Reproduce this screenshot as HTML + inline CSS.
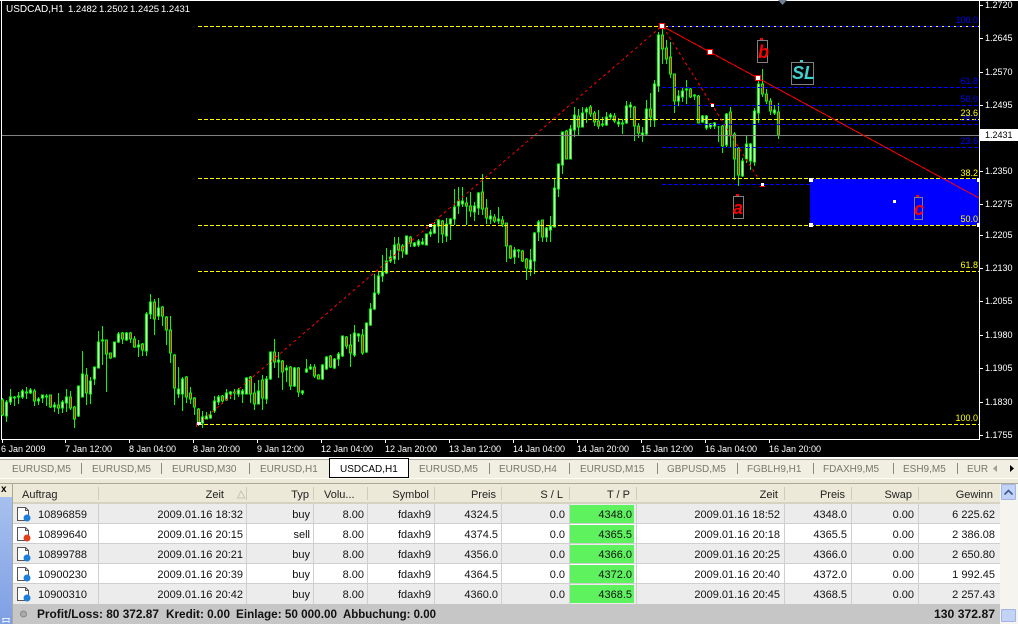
<!DOCTYPE html>
<html><head><meta charset="utf-8"><title>USDCAD,H1</title>
<style>
html,body{margin:0;padding:0;background:#000;width:1018px;height:624px;overflow:hidden}
svg{display:block;font-family:"Liberation Sans",Arial,sans-serif}
.c{shape-rendering:crispEdges}
.ax text{font-size:9px;fill:#fff}
.y{font-size:9px;fill:#ff0}
.b{font-size:9px;fill:#00f}
.tab{font-size:10px;fill:#77776a}
.h{font-size:11px;fill:#222}
.r{font-size:11px;fill:#111}
.e{text-anchor:end}
</style></head><body>
<svg width="1018" height="624" viewBox="0 0 1018 624" xmlns="http://www.w3.org/2000/svg">
<rect width="1018" height="624" fill="#000"/>
<!-- chart frame -->
<g class="c" fill="#fff">
<rect x="0" y="0" width="1018" height="1"/>
<rect x="1" y="0" width="1" height="440"/>
<rect x="1" y="439" width="979" height="1"/>
<rect x="979" y="0" width="1" height="440"/>
</g>
<!-- blue rectangle -->
<rect class="c" x="810" y="179" width="169" height="46" fill="#00f"/>
<!-- candles wicks -->
<path class="c" fill="none" stroke="#0f0" d="M2.5 398V416M6.5 400V422M10.5 389V405M14.5 396V406M18.5 392V404M22.5 389V399M26.5 387V399M30.5 388V394M34.5 389V406M38.5 397V405M42.5 395V403M46.5 394V406M50.5 395V408M54.5 402V412M58.5 393V414M62.5 400V413M66.5 389V412M70.5 391V410M74.5 406V428M78.5 386V417M82.5 351V397M86.5 368V405M90.5 377V404M94.5 367V385M98.5 331V368M102.5 326V365M106.5 340V392M110.5 353V359M114.5 342V357M118.5 332V343M122.5 332V344M126.5 332V341M130.5 332V343M134.5 336V348M138.5 340V357M142.5 343V356M146.5 312V356M150.5 294V319M154.5 299V335M158.5 298V320M162.5 306V326M166.5 316V345M170.5 316V363M174.5 354V405M178.5 367V398M182.5 377V411M186.5 376V403M190.5 387V404M194.5 397V415M198.5 408V426M202.5 411V428M206.5 412V419M210.5 411V419M214.5 396V413M218.5 395V405M222.5 395V404M226.5 389V401M230.5 391V399M234.5 389V400M238.5 388V397M242.5 389V403M246.5 377V394M250.5 376V403M254.5 383V410M258.5 380V404M262.5 375V410M266.5 376V404M270.5 352V380M274.5 339V368M278.5 352V378M282.5 360V390M286.5 365V382M290.5 366V390M294.5 367V387M298.5 367V397M302.5 390V395M306.5 359V373M310.5 364V370M314.5 364V378M318.5 374V379M322.5 364V380M326.5 356V370M330.5 355V368M334.5 358V369M338.5 352V366M342.5 336V357M346.5 336V349M350.5 334V367M354.5 325V357M358.5 333V342M362.5 329V355M366.5 323V353M370.5 303V326M374.5 274V310M378.5 272V295M382.5 255V282M386.5 248V274M390.5 250V263M394.5 237V264M398.5 237V260M402.5 244V258M406.5 236V255M410.5 236V247M414.5 242V247M418.5 239V247M422.5 238V245M426.5 234V245M430.5 229V237M434.5 222V234M438.5 219V243M442.5 220V243M446.5 218V242M450.5 218V240M454.5 189V225M458.5 187V214M462.5 187V207M466.5 197V225M470.5 192V217M474.5 202V221M478.5 192V215M482.5 174V215M486.5 199V224M490.5 210V224M494.5 214V223M498.5 207V224M502.5 216V227M506.5 223V262M510.5 245V259M514.5 247V264M518.5 249V258M522.5 250V262M526.5 258V280M530.5 249V276M534.5 232V274M538.5 220V241M542.5 220V242M546.5 227V242M550.5 216V242M554.5 178V227M558.5 164V197M562.5 132V174M566.5 130V159M570.5 125V159M574.5 107V137M578.5 109V135M582.5 107V127M586.5 107V123M590.5 105V117M594.5 111V126M598.5 110V129M602.5 117V127M606.5 112V126M610.5 113V120M614.5 113V123M618.5 118V127M622.5 119V134M626.5 101V124M630.5 102V118M634.5 106V141M638.5 123V138M642.5 127V142M646.5 100V135M650.5 93V127M654.5 80V127M658.5 32V92M662.5 28V64M666.5 40V64M670.5 42V78M674.5 74V113M678.5 90V106M682.5 88V102M686.5 80V104M690.5 88V98M694.5 94V100M698.5 95V123M702.5 115V123M706.5 115V130M710.5 123V129M714.5 122V129M718.5 126V142M722.5 125V153M726.5 113V147M730.5 107V147M734.5 132V180M738.5 147V186M742.5 158V177M746.5 136V163M750.5 143V170M754.5 108V166M758.5 81V123M762.5 69V97M766.5 89V104M770.5 98V115M774.5 105V115M778.5 103V139"/>
<!-- bear bodies -->
<path class="c" fill="#f00" stroke="#0f0" d="M1.5 400h2V415h-2zM33.5 391h2V401h-2zM49.5 395h2V407h-2zM57.5 405h2V408h-2zM69.5 397h2V408h-2zM73.5 407h2V419h-2zM85.5 375h2V393h-2zM105.5 340h2V354h-2zM109.5 353h2V358h-2zM121.5 333h2V339h-2zM129.5 333h2V339h-2zM133.5 339h2V347h-2zM141.5 344h2V350h-2zM153.5 302h2V319h-2zM161.5 307h2V316h-2zM165.5 317h2V330h-2zM169.5 330h2V353h-2zM173.5 355h2V388h-2zM185.5 377h2V397h-2zM189.5 393h2V399h-2zM193.5 398h2V407h-2zM197.5 409h2V424h-2zM221.5 396h2V401h-2zM249.5 377h2V394h-2zM253.5 393h2V404h-2zM261.5 380h2V398h-2zM273.5 352h2V362h-2zM281.5 361h2V372h-2zM289.5 367h2V386h-2zM297.5 368h2V392h-2zM313.5 367h2V376h-2zM317.5 375h2V379h-2zM329.5 356h2V367h-2zM345.5 337h2V346h-2zM349.5 345h2V353h-2zM361.5 335h2V353h-2zM397.5 244h2V250h-2zM401.5 246h2V251h-2zM409.5 237h2V243h-2zM441.5 221h2V234h-2zM465.5 203h2V206h-2zM469.5 206h2V211h-2zM481.5 192h2V209h-2zM485.5 208h2V218h-2zM493.5 217h2V221h-2zM501.5 220h2V224h-2zM505.5 223h2V246h-2zM509.5 246h2V258h-2zM521.5 251h2V261h-2zM525.5 259h2V268h-2zM541.5 220h2V237h-2zM565.5 131h2V159h-2zM577.5 116h2V127h-2zM589.5 107h2V114h-2zM593.5 113h2V122h-2zM597.5 121h2V126h-2zM613.5 116h2V121h-2zM633.5 107h2V126h-2zM637.5 126h2V133h-2zM649.5 109h2V117h-2zM661.5 35h2V49h-2zM665.5 48h2V59h-2zM669.5 57h2V74h-2zM673.5 74h2V101h-2zM689.5 89h2V97h-2zM697.5 96h2V123h-2zM721.5 126h2V146h-2zM729.5 112h2V136h-2zM733.5 134h2V159h-2zM737.5 148h2V175h-2zM761.5 84h2V94h-2zM765.5 94h2V101h-2zM769.5 101h2V111h-2zM777.5 112h2V135h-2z"/>
<!-- bull bodies -->
<path class="c" fill="#f5f5dc" stroke="#0f0" d="M5.5 402h2V416h-2zM9.5 397h2V402h-2zM13.5 397h2V398h-2zM17.5 396h2V397h-2zM21.5 391h2V397h-2zM25.5 392h2V393h-2zM29.5 390h2V393h-2zM37.5 399h2V401h-2zM41.5 395h2V398h-2zM45.5 396h2V397h-2zM53.5 405h2V407h-2zM61.5 402h2V408h-2zM65.5 397h2V403h-2zM77.5 386h2V416h-2zM81.5 374h2V397h-2zM89.5 381h2V394h-2zM93.5 367h2V379h-2zM97.5 342h2V368h-2zM101.5 340h2V341h-2zM113.5 342h2V357h-2zM117.5 334h2V342h-2zM125.5 333h2V340h-2zM137.5 345h2V347h-2zM145.5 314h2V351h-2zM149.5 302h2V314h-2zM157.5 308h2V316h-2zM177.5 389h2V394h-2zM181.5 379h2V394h-2zM201.5 417h2V423h-2zM205.5 416h2V419h-2zM209.5 415h2V418h-2zM213.5 401h2V411h-2zM217.5 397h2V402h-2zM225.5 393h2V400h-2zM229.5 392h2V394h-2zM233.5 392h2V393h-2zM237.5 390h2V394h-2zM241.5 391h2V394h-2zM245.5 378h2V394h-2zM257.5 391h2V404h-2zM265.5 379h2V399h-2zM269.5 352h2V379h-2zM277.5 360h2V362h-2zM285.5 368h2V370h-2zM293.5 368h2V386h-2zM301.5 391h2V393h-2zM305.5 369h2V372h-2zM309.5 367h2V369h-2zM321.5 365h2V379h-2zM325.5 357h2V369h-2zM333.5 359h2V368h-2zM337.5 354h2V359h-2zM341.5 336h2V356h-2zM353.5 333h2V355h-2zM357.5 334h2V336h-2zM365.5 323h2V352h-2zM369.5 309h2V325h-2zM373.5 293h2V309h-2zM377.5 276h2V293h-2zM381.5 272h2V276h-2zM385.5 261h2V273h-2zM389.5 257h2V261h-2zM393.5 245h2V259h-2zM405.5 236h2V254h-2zM413.5 243h2V246h-2zM417.5 241h2V245h-2zM421.5 242h2V244h-2zM425.5 234h2V245h-2zM429.5 232h2V234h-2zM433.5 225h2V233h-2zM437.5 220h2V226h-2zM445.5 224h2V236h-2zM449.5 219h2V224h-2zM453.5 207h2V219h-2zM457.5 201h2V206h-2zM461.5 201h2V204h-2zM473.5 206h2V212h-2zM477.5 193h2V208h-2zM489.5 216h2V219h-2zM497.5 219h2V221h-2zM513.5 250h2V257h-2zM517.5 250h2V251h-2zM529.5 260h2V269h-2zM533.5 233h2V261h-2zM537.5 222h2V232h-2zM545.5 228h2V237h-2zM549.5 226h2V230h-2zM553.5 188h2V227h-2zM557.5 164h2V189h-2zM561.5 132h2V165h-2zM569.5 129h2V159h-2zM573.5 115h2V130h-2zM581.5 113h2V127h-2zM585.5 109h2V112h-2zM601.5 124h2V125h-2zM605.5 117h2V125h-2zM609.5 115h2V117h-2zM617.5 122h2V124h-2zM621.5 123h2V124h-2zM625.5 106h2V123h-2zM629.5 105h2V107h-2zM641.5 133h2V135h-2zM645.5 109h2V134h-2zM653.5 84h2V120h-2zM657.5 35h2V86h-2zM677.5 96h2V101h-2zM681.5 91h2V97h-2zM685.5 89h2V90h-2zM693.5 95h2V96h-2zM701.5 116h2V122h-2zM705.5 116h2V128h-2zM709.5 124h2V127h-2zM713.5 123h2V126h-2zM717.5 127h2V127h-2zM725.5 114h2V145h-2zM741.5 161h2V176h-2zM745.5 144h2V159h-2zM749.5 144h2V161h-2zM753.5 111h2V162h-2zM757.5 84h2V113h-2zM773.5 110h2V113h-2z"/>
<!-- yellow fib -->
<g class="c" fill="none" stroke="#ff0" stroke-dasharray="4 2">
<path d="M198 26.5H979"/><path d="M198 119.5H979"/><path d="M198 178.5H979"/><path d="M198 225.5H979"/><path d="M198 271.5H979"/><path d="M198 424.5H979"/>
</g>
<!-- blue fib -->
<g class="c" fill="none" stroke="#00f" stroke-dasharray="4 2">
<path d="M662 26.5H979"/><path d="M662 87.5H979"/><path d="M662 105.5H979"/><path d="M662 124.5H979"/><path d="M662 147.5H979"/><path d="M662 184.5H810"/>
</g>
<!-- grey price line -->
<rect class="c" x="2" y="135" width="977" height="1" fill="#808080"/>
<!-- red lines -->
<g class="c" fill="none" stroke="#f00">
<path d="M662 26L979 198"/>
<path stroke-dasharray="3 3" d="M198 424L662 26"/>
<path stroke-dasharray="3 3" d="M663 27L758 178"/>
</g>
<!-- anchor squares -->
<g class="c" fill="#fff" stroke="#f00">
<rect x="659.5" y="23.5" width="5" height="5" stroke-width="1"/>
<rect x="707.5" y="49.5" width="5" height="5"/>
<rect x="755.5" y="75.5" width="5" height="5"/>
</g>
<g class="c" fill="#fff">
<rect x="197" y="422" width="4" height="3"/><rect x="196" y="423" width="1" height="4" fill="#f00"/>
<rect x="429" y="224" width="3" height="3"/><rect x="432" y="223" width="3" height="1" fill="#f00"/>
<rect x="711" y="104" width="3" height="3"/><rect x="710" y="103" width="4" height="1" fill="#f00"/>
<rect x="761" y="183" width="3" height="3"/><rect x="760" y="186" width="5" height="1" fill="#f00"/>
<rect x="809" y="178" width="4" height="4"/><rect x="977" y="178" width="3" height="4"/>
<rect x="809" y="223" width="4" height="4"/><rect x="977" y="223" width="3" height="4"/>
<rect x="893" y="200" width="3" height="3"/>
</g>
<!-- labels -->
<g text-anchor="end">
<text x="978" y="23" class="b">100.0</text>
<text x="978" y="84" class="b">61.8</text>
<text x="978" y="102" class="b">50.0</text>
<text x="978" y="121" class="b">38.2</text>
<text x="978" y="144" class="b">23.6</text>
<text x="978" y="116" class="y">23.6</text>
<text x="978" y="176" class="y">38.2</text>
<text x="978" y="222" class="y">50.0</text>
<text x="978" y="268" class="y">61.8</text>
<text x="978" y="421" class="y">100.0</text>
</g>
<!-- wave labels -->
<g class="c" fill="none" stroke="#808080">
<rect x="757.5" y="40.5" width="10" height="22"/>
<rect x="733.5" y="196.5" width="10" height="22"/>
<rect x="791.5" y="62.5" width="22" height="22"/>
<rect x="914.5" y="197.5" width="8" height="22"/>
</g>
<g class="c" fill="#f00"><rect x="760" y="38" width="3" height="2"/><rect x="736" y="194" width="3" height="2"/><rect x="916" y="195" width="3" height="2"/></g>
<rect class="c" x="800" y="60" width="3" height="2" fill="#40d0d0"/>
<g font-style="italic" font-weight="bold" font-size="18" fill="#f00">
<text x="758" y="58">b</text><text x="733" y="214">a</text><text x="914" y="215">c</text>
</g>
<text x="792" y="79" font-style="italic" font-size="18" font-weight="bold" fill="#40d0d0">SL</text>
<polygon points="778,0 787,0 782.5,5" fill="#708090"/>
<!-- title -->
<g font-size="10" fill="#fff"><text x="6" y="12">USDCAD,H1</text></g>
<g font-size="9.5" fill="#fff"><text x="68" y="12">1.2482</text><text x="99" y="12">1.2502</text><text x="130" y="12">1.2425</text><text x="161" y="12">1.2431</text></g>
<!-- price axis -->
<path class="c" stroke="#fff" fill="none" d="M980 5.5h3M980 38.5h3M980 72.5h3M980 105.5h3M980 171.5h3M980 204.5h3M980 235.5h3M980 268.5h3M980 301.5h3M980 335.5h3M980 368.5h3M980 402.5h3M980 435.5h3"/>
<g class="ax">
<text x="985" y="8">1.2720</text><text x="985" y="41">1.2645</text><text x="985" y="75">1.2570</text><text x="985" y="108">1.2495</text><text x="985" y="174">1.2350</text><text x="985" y="207">1.2275</text><text x="985" y="238">1.2205</text><text x="985" y="271">1.2130</text><text x="985" y="304">1.2055</text><text x="985" y="338">1.1980</text><text x="985" y="371">1.1905</text><text x="985" y="405">1.1830</text><text x="985" y="438">1.1755</text>
</g>
<rect class="c" x="980" y="129" width="38" height="12" fill="#fff"/>
<text x="985" y="138" font-size="9" fill="#000">1.2431</text>
<!-- time axis -->
<path class="c" stroke="#fff" fill="none" d="M2.5 440v3M65.5 440v3M129.5 440v3M193.5 440v3M257.5 440v3M321.5 440v3M385.5 440v3M449.5 440v3M513.5 440v3M577.5 440v3M641.5 440v3M705.5 440v3M769.5 440v3"/>
<g class="ax">
<text x="1" y="452">6 Jan 2009</text><text x="65" y="452">7 Jan 12:00</text><text x="129" y="452">8 Jan 04:00</text><text x="193" y="452">8 Jan 20:00</text><text x="257" y="452">9 Jan 12:00</text><text x="321" y="452">12 Jan 04:00</text><text x="385" y="452">12 Jan 20:00</text><text x="449" y="452">13 Jan 12:00</text><text x="513" y="452">14 Jan 04:00</text><text x="577" y="452">14 Jan 20:00</text><text x="641" y="452">15 Jan 12:00</text><text x="705" y="452">16 Jan 04:00</text><text x="769" y="452">16 Jan 20:00</text>
</g>
<!-- tab bar -->
<g class="c">
<rect x="0" y="457" width="1018" height="167" fill="#ece9d8"/>
<rect x="0" y="457" width="1018" height="2" fill="#fff"/>
<rect x="0" y="459" width="1018" height="1" fill="#aca899"/>
<rect x="0" y="460" width="1018" height="18" fill="#f1efe2"/>
<rect x="0" y="478" width="1018" height="1" fill="#fffef5"/>
<rect x="0" y="483" width="1018" height="1" fill="#aca899"/>
<rect x="329" y="458" width="80" height="20" fill="#000"/>
<rect x="330" y="459" width="78" height="18" fill="#fff"/>
<path fill="none" stroke="#8a8a7a" d="M81.5 463v11M161.5 463v11M249.5 463v11M489.5 463v11M569.5 463v11M657.5 463v11M737.5 463v11M813.5 463v11M893.5 463v11M957.5 463v11"/>
</g>
<g>
<text x="12" y="472" class="tab">EURUSD,M5</text><text x="92" y="472" class="tab">EURUSD,M5</text><text x="172" y="472" class="tab">EURUSD,M30</text><text x="260" y="472" class="tab">EURUSD,H1</text>
<text x="340" y="472" font-size="10" fill="#000">USDCAD,H1</text>
<text x="419" y="472" class="tab">EURUSD,M5</text><text x="499" y="472" class="tab">EURUSD,H4</text><text x="580" y="472" class="tab">EURUSD,M15</text><text x="667" y="472" class="tab">GBPUSD,M5</text><text x="747" y="472" class="tab">FGBLH9,H1</text><text x="823" y="472" class="tab">FDAXH9,M5</text><text x="903" y="472" class="tab">ESH9,M5</text><text x="967" y="472" class="tab">EUR</text>
</g>
<polygon points="997,465 997,472 993,468.5" fill="#a0a090"/>
<polygon points="1010,465 1010,472 1014,468.5" fill="#000"/>
<!-- sidebar -->
<defs><linearGradient id="sb" x1="0" y1="0" x2="0" y2="1"><stop offset="0" stop-color="#a6c0ee"/><stop offset="1" stop-color="#7f9fe4"/></linearGradient>
<g id="doc"><path d="M17.5 .5H25.5L28.5 3.5V13.5H17.5Z" transform="translate(0 0)" fill="#fff" stroke="#555"/><path d="M25.5 .5V3.5H28.5" fill="none" stroke="#555"/></g></defs>
<rect class="c" x="0" y="497" width="12" height="127" fill="url(#sb)"/>
<rect class="c" x="12" y="484" width="1" height="140" fill="#aca899"/>
<text x="1" y="492" font-size="10" font-weight="bold" fill="#000">x</text>
<path class="c" fill="none" stroke="#e8eefc" d="M2 618.5h8M3 621.5h6M3 619v4M9 619v4"/>
<!-- header -->
<g class="c">
<rect x="13" y="484" width="987" height="18" fill="#ece9d8"/>
<rect x="13" y="502" width="987" height="2" fill="#d6d2c2"/>
<path fill="none" stroke="#d0ccbb" d="M98.5 487v13M246.5 487v13M313.5 487v13M367.5 487v13M434.5 487v13M501.5 487v13M569.5 487v13M636.5 487v13M784.5 487v13M851.5 487v13M918.5 487v13"/>
</g>
<g class="h">
<text x="22" y="498" class="h">Auftrag</text>
<text x="224" y="498" class="h e">Zeit</text>
<text x="309" y="498" class="h e">Typ</text>
<text x="324" y="498" class="h">Volu...</text>
<text x="429" y="498" class="h e">Symbol</text>
<text x="496" y="498" class="h e">Preis</text>
<text x="563" y="498" class="h e">S / L</text>
<text x="630" y="498" class="h e">T / P</text>
<text x="778" y="498" class="h e">Zeit</text>
<text x="845" y="498" class="h e">Preis</text>
<text x="912" y="498" class="h e">Swap</text>
<text x="993" y="498" class="h e">Gewinn</text>
</g>
<polygon points="237.5,498 245,498 241,491" fill="none" stroke="#c9c5b5"/>
<!-- rows -->
<g class="c">
<rect x="13" y="504" width="987" height="100" fill="#fff"/>
<rect x="13" y="504" width="987" height="20" fill="#ececec"/>
<rect x="13" y="544" width="987" height="20" fill="#ececec"/>
<rect x="13" y="584" width="987" height="20" fill="#ececec"/>
<path fill="none" stroke="#cfcfcf" d="M13 523.5H1000M13 543.5H1000M13 563.5H1000M13 583.5H1000M98.5 504V604M246.5 504V604M313.5 504V604M367.5 504V604M434.5 504V604M501.5 504V604M569.5 504V604M636.5 504V604M784.5 504V604M851.5 504V604M918.5 504V604"/>
<g fill="#5ff25f"><rect x="570" y="505" width="64" height="18"/><rect x="570" y="525" width="64" height="18"/><rect x="570" y="545" width="64" height="18"/><rect x="570" y="565" width="64" height="18"/><rect x="570" y="585" width="64" height="18"/></g>
</g>
<!-- icons -->
<use href="#doc" y="507"/><use href="#doc" y="527"/><use href="#doc" y="547"/><use href="#doc" y="567"/><use href="#doc" y="587"/>
<circle cx="27" cy="518" r="3.5" fill="#1f7fd8"/><circle cx="27" cy="538" r="3.5" fill="#e0401a"/><circle cx="27" cy="558" r="3.5" fill="#1f7fd8"/><circle cx="27" cy="578" r="3.5" fill="#1f7fd8"/><circle cx="27" cy="598" r="3.5" fill="#1f7fd8"/>
<!-- row text -->
<g class="r">
<text x="38" y="518" class="r">10896859</text><text x="243" y="518" class="r e">2009.01.16 18:32</text><text x="310" y="518" class="r e">buy</text><text x="364" y="518" class="r e">8.00</text><text x="431" y="518" class="r e">fdaxh9</text><text x="498" y="518" class="r e">4324.5</text><text x="565" y="518" class="r e">0.0</text><text x="632" y="518" class="r e">4348.0</text><text x="780" y="518" class="r e">2009.01.16 18:52</text><text x="847" y="518" class="r e">4348.0</text><text x="914" y="518" class="r e">0.00</text><text x="995" y="518" class="r e">6 225.62</text>
<text x="38" y="538" class="r">10899640</text><text x="243" y="538" class="r e">2009.01.16 20:15</text><text x="310" y="538" class="r e">sell</text><text x="364" y="538" class="r e">8.00</text><text x="431" y="538" class="r e">fdaxh9</text><text x="498" y="538" class="r e">4374.5</text><text x="565" y="538" class="r e">0.0</text><text x="632" y="538" class="r e">4365.5</text><text x="780" y="538" class="r e">2009.01.16 20:18</text><text x="847" y="538" class="r e">4365.5</text><text x="914" y="538" class="r e">0.00</text><text x="995" y="538" class="r e">2 386.08</text>
<text x="38" y="558" class="r">10899788</text><text x="243" y="558" class="r e">2009.01.16 20:21</text><text x="310" y="558" class="r e">buy</text><text x="364" y="558" class="r e">8.00</text><text x="431" y="558" class="r e">fdaxh9</text><text x="498" y="558" class="r e">4356.0</text><text x="565" y="558" class="r e">0.0</text><text x="632" y="558" class="r e">4366.0</text><text x="780" y="558" class="r e">2009.01.16 20:25</text><text x="847" y="558" class="r e">4366.0</text><text x="914" y="558" class="r e">0.00</text><text x="995" y="558" class="r e">2 650.80</text>
<text x="38" y="578" class="r">10900230</text><text x="243" y="578" class="r e">2009.01.16 20:39</text><text x="310" y="578" class="r e">buy</text><text x="364" y="578" class="r e">8.00</text><text x="431" y="578" class="r e">fdaxh9</text><text x="498" y="578" class="r e">4364.5</text><text x="565" y="578" class="r e">0.0</text><text x="632" y="578" class="r e">4372.0</text><text x="780" y="578" class="r e">2009.01.16 20:40</text><text x="847" y="578" class="r e">4372.0</text><text x="914" y="578" class="r e">0.00</text><text x="995" y="578" class="r e">1 992.45</text>
<text x="38" y="598" class="r">10900310</text><text x="243" y="598" class="r e">2009.01.16 20:42</text><text x="310" y="598" class="r e">buy</text><text x="364" y="598" class="r e">8.00</text><text x="431" y="598" class="r e">fdaxh9</text><text x="498" y="598" class="r e">4360.0</text><text x="565" y="598" class="r e">0.0</text><text x="632" y="598" class="r e">4368.5</text><text x="780" y="598" class="r e">2009.01.16 20:45</text><text x="847" y="598" class="r e">4368.5</text><text x="914" y="598" class="r e">0.00</text><text x="995" y="598" class="r e">2 257.43</text>
</g>
<!-- footer -->
<rect class="c" x="13" y="604" width="987" height="20" fill="#c6c6c6"/>
<circle cx="23.5" cy="614" r="3" fill="#aaa" stroke="#888"/>
<g font-size="11.5" font-weight="bold" fill="#111">
<text x="37" y="618" textLength="122" lengthAdjust="spacingAndGlyphs">Profit/Loss: 80 372.87</text>
<text x="166" y="618" textLength="64" lengthAdjust="spacingAndGlyphs">Kredit: 0.00</text>
<text x="236" y="618" textLength="101" lengthAdjust="spacingAndGlyphs">Einlage: 50 000.00</text>
<text x="343" y="618" textLength="93" lengthAdjust="spacingAndGlyphs">Abbuchung: 0.00</text>
<text x="995" y="618" text-anchor="end" textLength="61" lengthAdjust="spacingAndGlyphs">130 372.87</text>
</g>
<!-- scrollbar -->
<g class="c">
<rect x="1000" y="484" width="18" height="140" fill="#f5f4ee"/>
<rect x="1001.5" y="484.5" width="14" height="15" rx="1" fill="#c3d3f8" stroke="#9fb5e6"/>
<rect x="1001.5" y="609.5" width="14" height="12" rx="1" fill="#c3d3f8" stroke="#9fb5e6"/>
</g>
<path d="M1004.5 494.5L1008.5 490.5L1012.5 494.5" fill="none" stroke="#3a5a8c" stroke-width="1.6"/>
</svg>
</body></html>
